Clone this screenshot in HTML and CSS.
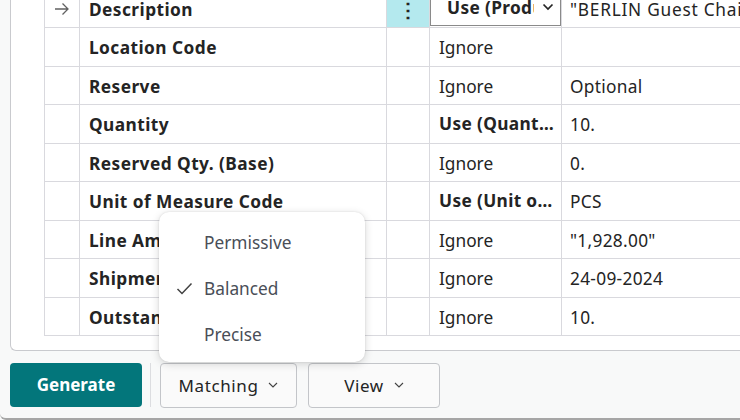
FILE: index.html
```html
<!DOCTYPE html>
<html>
<head>
<meta charset="utf-8">
<link rel="stylesheet" href="styles.css">
</head>
<body>
<div class="frame">
  <div class="card">
    <div class="grid">
      <div class="row">
        <div class="cell arrow"><svg width="16" height="14" viewBox="0 0 16 14"><path d="M1 7H14M8.5 1.5L14 7L8.5 12.5" fill="none" stroke="#616161" stroke-width="1.3"/></svg></div>
        <div class="cell label">Description</div>
        <div class="cell dots active">⋮</div>
        <div class="cell val sel-cell"><div class="select"><span class="sel-text">Use (Product Name)</span><svg class="sel-chev" width="12" height="8" viewBox="0 0 12 8"><path d="M1.5 1.5L6 6L10.5 1.5" fill="none" stroke="#242424" stroke-width="1.7"/></svg></div></div>
        <div class="cell data wide">"BERLIN Guest Chair, yellow"</div>
      </div>
      <div class="row">
        <div class="cell arrow"></div>
        <div class="cell label">Location Code</div>
        <div class="cell dots"></div>
        <div class="cell val">Ignore</div>
        <div class="cell data"></div>
      </div>
      <div class="row">
        <div class="cell arrow"></div>
        <div class="cell label">Reserve</div>
        <div class="cell dots"></div>
        <div class="cell val">Ignore</div>
        <div class="cell data">Optional</div>
      </div>
      <div class="row">
        <div class="cell arrow"></div>
        <div class="cell label">Quantity</div>
        <div class="cell dots"></div>
        <div class="cell val strong">Use (Quantity)</div>
        <div class="cell data">10.</div>
      </div>
      <div class="row">
        <div class="cell arrow"></div>
        <div class="cell label">Reserved Qty. (Base)</div>
        <div class="cell dots"></div>
        <div class="cell val">Ignore</div>
        <div class="cell data">0.</div>
      </div>
      <div class="row">
        <div class="cell arrow"></div>
        <div class="cell label">Unit of Measure Code</div>
        <div class="cell dots"></div>
        <div class="cell val strong">Use (Unit of Measure Code)</div>
        <div class="cell data">PCS</div>
      </div>
      <div class="row">
        <div class="cell arrow"></div>
        <div class="cell label">Line Amount</div>
        <div class="cell dots"></div>
        <div class="cell val">Ignore</div>
        <div class="cell data">"1,928.00"</div>
      </div>
      <div class="row">
        <div class="cell arrow"></div>
        <div class="cell label">Shipment Date</div>
        <div class="cell dots"></div>
        <div class="cell val">Ignore</div>
        <div class="cell data">24-09-2024</div>
      </div>
      <div class="row">
        <div class="cell arrow"></div>
        <div class="cell label">Outstanding Quantity</div>
        <div class="cell dots"></div>
        <div class="cell val">Ignore</div>
        <div class="cell data">10.</div>
      </div>
    </div>
  </div>
  <div class="footer">
    <button class="btn primary">Generate</button>
    <div class="sep"></div>
    <button class="btn secondary matching">Matching <svg width="10" height="6" viewBox="0 0 10 6"><path d="M1 1L5 5L9 1" fill="none" stroke="#424242" stroke-width="1.1"/></svg></button>
    <button class="btn secondary view">View <svg width="10" height="6" viewBox="0 0 10 6"><path d="M1 1L5 5L9 1" fill="none" stroke="#424242" stroke-width="1.1"/></svg></button>
  </div>
  <div class="menu">
    <div class="item"><span class="check"></span><span>Permissive</span></div>
    <div class="item"><span class="check"><svg width="17" height="13" viewBox="0 0 17 13"><path d="M1.5 7L6 11.5L15.5 1.5" fill="none" stroke="#424242" stroke-width="1.5"/></svg></span><span>Balanced</span></div>
    <div class="item"><span class="check"></span><span>Precise</span></div>
  </div>
</div>
</body>
</html>
```

FILE: styles.css
```css
html, body {
  margin: 0;
  padding: 0;
}
body {
  font-family: "Noto Sans", "Open Sans", sans-serif;
  color: #242424;
  background: #f8f9f9;
  overflow: hidden;
}
.frame {
  position: relative;
  width: 740px;
  height: 420px;
  box-sizing: border-box;
  border-bottom: 2px solid #a6a6a6;
  border-bottom-left-radius: 6px;
  overflow: hidden;
}
.card {
  margin-left: 10px;
  margin-top: -10.5px;
  height: 361px;
  box-sizing: border-box;
  background: #ffffff;
  border-left: 1px solid #c9cace;
  border-bottom: 1px solid #c9cace;
  border-bottom-left-radius: 6px;
  padding-left: 33px;
  padding-bottom: 14px;
}
.grid {
  display: flex;
  flex-direction: column;
}
.row {
  display: grid;
  grid-template-columns: 35px 307px 43px 132px 220px;
  height: 38.5px;
  box-sizing: border-box;
  border-bottom: 1px solid #d9d9de;
}
.cell {
  border-left: 1px solid #d9d9de;
  display: flex;
  align-items: center;
  white-space: nowrap;
  overflow: hidden;
  font-size: 17.3px;
  min-width: 0;
  padding-top: 1.5px;
  box-sizing: border-box;
}
.arrow {
  justify-content: center;
}
.label {
  font-weight: 700;
  letter-spacing: 0.45px;
  padding-left: 9px;
}
.dots {
  justify-content: center;
  font-size: 20px;
  font-weight: 700;
}
.dots.active {
  background: #b4e9ee;
}
.val {
  padding-left: 9px;
  padding-right: 4px;
}
.val.strong {
  font-weight: 700;
  letter-spacing: 0.35px;
  display: block;
  line-height: 38px;
  text-overflow: ellipsis;
  padding-top: 0;
}
.sel-cell {
  padding: 0;
  align-items: stretch;
}
.select {
  flex: 1;
  display: flex;
  align-items: center;
  border: 1px solid #8a8a8a;
  border-top: none;
  background: #fff;
  margin-bottom: 1.5px;
  padding-left: 16px;
  padding-right: 6px;
  overflow: hidden;
}
.sel-text {
  flex: 1;
  font-weight: 700;
  letter-spacing: 0.35px;
  overflow: hidden;
  white-space: nowrap;
  min-width: 0;
}
.sel-chev {
  flex: none;
  margin-left: 8px;
}
.data {
  padding-left: 8px;
  letter-spacing: 0.3px;
}
.data.wide {
  letter-spacing: 0.75px;
}
.footer {
  display: flex;
  align-items: flex-start;
  padding: 12px 0 0 10px;
}
.btn {
  font-family: "Noto Sans", "Open Sans", sans-serif;
  font-size: 17px;
  height: 45px;
  box-sizing: border-box;
  border-radius: 4px;
  display: flex;
  align-items: center;
  justify-content: center;
  gap: 10px;
  padding: 0;
  cursor: pointer;
}
.primary {
  width: 132px;
  height: 44px;
  background: #03767b;
  color: #ffffff;
  font-weight: 700;
  border: none;
}
.sep {
  width: 1px;
  height: 44px;
  background: #dcdde0;
  margin: 0 9px 0 8px;
}
.secondary {
  background: #fafafa;
  color: #242424;
  border: 1px solid #c3c5c9;
  letter-spacing: 0.6px;
}
.matching {
  width: 137px;
}
.view {
  width: 132px;
  margin-left: 11px;
}
.menu {
  position: absolute;
  left: 159px;
  top: 212px;
  width: 206px;
  height: 150px;
  box-sizing: border-box;
  background: #ffffff;
  border-radius: 10px;
  box-shadow: 0 2px 8px rgba(0, 0, 0, 0.16), 0 0 2px rgba(0, 0, 0, 0.12);
  padding: 7px 0 5px;
}
.item {
  height: 46px;
  display: flex;
  align-items: center;
  font-size: 17.3px;
  color: #4a4e57;
}
.check {
  width: 45px;
  padding-left: 17px;
  box-sizing: border-box;
  display: flex;
  align-items: center;
}
```
